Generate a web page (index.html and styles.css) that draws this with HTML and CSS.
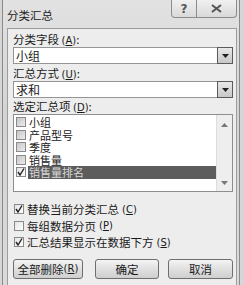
FILE: index.html
```html
<!DOCTYPE html>
<html lang="zh-CN">
<head>
  <meta charset="UTF-8">
  <title>分类汇总</title>
  <link rel="stylesheet" href="styles.css">
</head>
<body>
  <div class="dialog">
    <div class="titlebar">
      <span class="title">分类汇总</span>
      <div class="caption-btns">
        <span class="cap-btn help">?</span>
        <span class="cap-btn close">
          <svg width="11" height="9" viewBox="0 0 11 9"><path d="M1 1 L10 8 M10 1 L1 8" stroke="#555" stroke-width="2" fill="none"/></svg>
        </span>
      </div>
    </div>

    <div class="client">
      <div class="label">分类字段 <span class="key">(<u>A</u>)</span>:</div>
      <div class="combo">
        <span class="combo-text">小组</span>
        <span class="drop"><svg width="7" height="4" viewBox="0 0 7 4"><path d="M0 0 H7 L3.5 4 Z" fill="#222"/></svg></span>
      </div>

      <div class="label label-2">汇总方式 <span class="key">(<u>U</u>)</span>:</div>
      <div class="combo">
        <span class="combo-text">求和</span>
        <span class="drop"><svg width="7" height="4" viewBox="0 0 7 4"><path d="M0 0 H7 L3.5 4 Z" fill="#222"/></svg></span>
      </div>

      <div class="label label-3">选定汇总项 <span class="key">(<u>D</u>)</span>:</div>
      <div class="listbox">
        <ul class="items">
          <li class="item"><span class="cb cb-grey"></span><span class="item-text">小组</span></li>
          <li class="item"><span class="cb cb-grey"></span><span class="item-text">产品型号</span></li>
          <li class="item"><span class="cb cb-grey"></span><span class="item-text">季度</span></li>
          <li class="item"><span class="cb cb-grey"></span><span class="item-text">销售量</span></li>
          <li class="item selected">
            <span class="cb"><svg width="8" height="8" viewBox="0 0 8 8"><path d="M1 4 L3 7 L7 0.5" stroke="#222" stroke-width="1.4" fill="none"/></svg></span>
            <span class="item-text">销售量排名</span>
          </li>
        </ul>
        <div class="scrollbar">
          <svg width="7" height="4" viewBox="0 0 7 4"><path d="M0 4 H7 L3.5 0 Z" fill="#777"/></svg>
          <svg width="7" height="4" viewBox="0 0 7 4"><path d="M0 0 H7 L3.5 4 Z" fill="#777"/></svg>
        </div>
      </div>

      <div class="options">
        <div class="option">
          <span class="cb"><svg width="8" height="8" viewBox="0 0 8 8"><path d="M1 4 L3 7 L7 0.5" stroke="#222" stroke-width="1.4" fill="none"/></svg></span>
          替换当前分类汇总 <span class="key">(<u>C</u>)</span>
        </div>
        <div class="option">
          <span class="cb"></span>
          每组数据分页 <span class="key">(<u>P</u>)</span>
        </div>
        <div class="option">
          <span class="cb"><svg width="8" height="8" viewBox="0 0 8 8"><path d="M1 4 L3 7 L7 0.5" stroke="#222" stroke-width="1.4" fill="none"/></svg></span>
          汇总结果显示在数据下方 <span class="key">(<u>S</u>)</span>
        </div>
      </div>

      <div class="buttons">
        <span class="btn btn-clear">全部删除 <span class="key">(<u>R</u>)</span></span>
        <span class="btn btn-ok">确定</span>
        <span class="btn btn-cancel">取消</span>
      </div>
    </div>
  </div>
</body>
</html>
```

FILE: styles.css
```css
html, body {
  margin: 0;
  padding: 0;
  background-color: #d6d6d6;
  font-family: "Noto Sans CJK SC", "Noto Sans", sans-serif;
  color: #1a1a1a;
}

.dialog {
  margin-left: 2px;
  width: 236px;
  height: 285px;
  border-left: 1px solid #8a8a8a;
  border-right: 1px solid #8a8a8a;
  background: linear-gradient(to bottom, #e2e2e2, #d4d4d4 40%, #dadada);
}

.titlebar {
  height: 28px;
  display: flex;
  justify-content: space-between;
  align-items: flex-start;
}

.title {
  margin: 8px 0 0 4px;
  font-size: 11.5px;
  line-height: 14px;
  color: #222;
}

.caption-btns {
  display: flex;
  margin-right: 2px;
}

.cap-btn {
  height: 17px;
  display: flex;
  align-items: center;
  justify-content: center;
  border: 1px solid #8c8c8c;
  border-top: none;
  background: linear-gradient(to bottom, #f0f0f0, #d9d9d9);
  font-family: "DejaVu Sans", sans-serif;
  font-size: 12px;
  font-weight: bold;
  color: #555;
}

.help {
  width: 24px;
  border-radius: 0 0 0 4px;
}

.close {
  width: 39px;
  border-left: none;
  border-radius: 0 0 4px 0;
}

.client {
  margin: 0 2px 0 4px;
  height: 254px;
  border: 1px solid #9c9c9c;
  background-color: #ededed;
  padding: 3px 3px 0 5px;
}

.label {
  font-size: 11.5px;
  line-height: 15px;
  height: 15px;
}

.label-2 {
  margin-top: 2px;
}

.label-3 {
  margin-top: 1px;
}

.key {
  font-size: 10px;
  font-family: "DejaVu Sans", sans-serif;
}

.combo {
  box-sizing: border-box;
  width: 220px;
  height: 17px;
  display: flex;
  align-items: center;
  border: 1px solid #959595;
  background-color: #fff;
}

.combo-text {
  padding-left: 2px;
  font-size: 12px;
  line-height: 15px;
}

.drop {
  box-sizing: border-box;
  margin: -1px -1px -1px auto;
  width: 16px;
  height: 17px;
  display: flex;
  align-items: center;
  justify-content: center;
  border: 1px solid #5a5a5a;
  background: linear-gradient(to bottom, #e8e8e8, #c8c8c8);
}

.listbox {
  box-sizing: border-box;
  width: 220px;
  height: 78px;
  display: flex;
  border: 1px solid #8e8e8e;
  background-color: #fff;
}

.items {
  flex: 1;
  margin: 0;
  padding: 1px 0 0 2px;
  list-style: none;
}

.item {
  height: 12.5px;
  display: flex;
  align-items: center;
  font-size: 11px;
  line-height: 12.5px;
}

.item-text {
  margin-left: 2px;
  padding-left: 1px;
  height: 12.5px;
}

.selected .item-text {
  flex: 1;
  background-color: #5c5c5c;
  color: #d8d8d8;
}

.cb {
  box-sizing: border-box;
  width: 10px;
  height: 10px;
  display: flex;
  align-items: center;
  justify-content: center;
  border: 1px solid #8a8a8a;
  background: linear-gradient(135deg, #e4e4e4, #ffffff);
}

.cb-grey {
  background: linear-gradient(135deg, #c6c6c6, #ececec);
}

.scrollbar {
  width: 15px;
  display: flex;
  flex-direction: column;
  align-items: center;
  justify-content: space-between;
  padding: 8px 0 6px;
  background-color: #eeeeee;
  border-left: 1px solid #dddddd;
}

.options {
  padding-top: 9px;
}

.option {
  height: 16.5px;
  display: flex;
  align-items: center;
  gap: 3px;
  padding-left: 1px;
  font-size: 11.5px;
}

.buttons {
  margin-top: 8px;
  display: flex;
}

.btn {
  box-sizing: border-box;
  height: 20px;
  display: flex;
  align-items: center;
  justify-content: center;
  border: 1px solid #6e6e6e;
  border-radius: 3px;
  background: linear-gradient(to bottom, #f4f4f4, #e0e0e0 50%, #cfcfcf);
  font-size: 11.5px;
}

.btn-clear {
  width: 70px;
}

.btn-ok {
  width: 64px;
  margin-left: 12px;
}

.btn-cancel {
  width: 65px;
  margin-left: 9px;
}
```
